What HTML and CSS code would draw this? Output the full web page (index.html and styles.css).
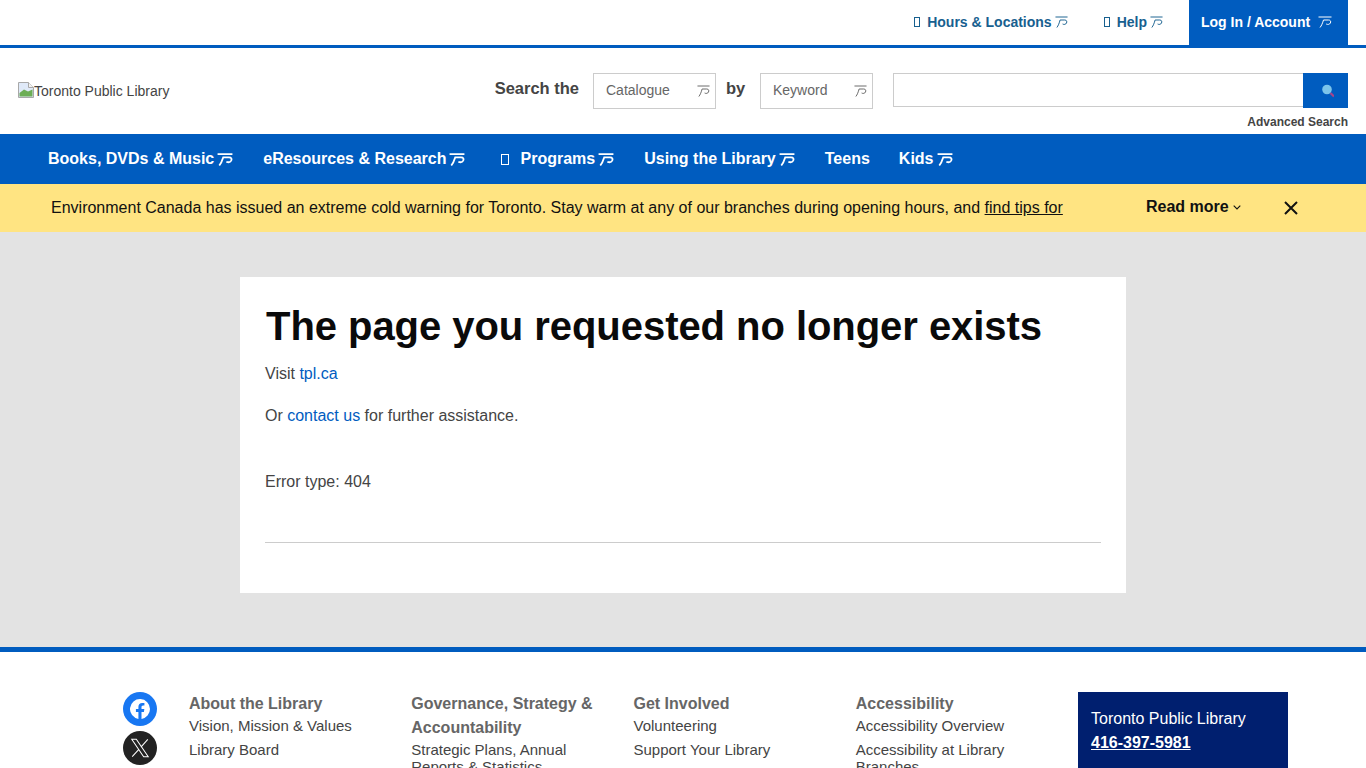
FILE: index.html
```html
<!DOCTYPE html>
<html lang="en">
<head>
<meta charset="utf-8">
<title>Toronto Public Library</title>
<link rel="stylesheet" href="styles.css">
</head>
<body>
<svg class="defs" width="0" height="0" aria-hidden="true">
  <symbol id="arr" viewBox="0 0 14 12" preserveAspectRatio="none">
    <path d="M0.5 1H13.500M2 11.500C3.500 9.800 4.600 7 5.500 4H10.500C12.600 4 13.100 5.500 12.400 7C11.600 8.500 9.800 8.800 8.200 8" fill="none" stroke="currentColor"/>
  </symbol>
</svg>
<header>
  <div class="util">
    <a class="util-link" href="#"><span class="tofu"></span>Hours &amp; Locations<svg class="arr"><use href="#arr"/></svg></a>
    <a class="util-link" href="#"><span class="tofu"></span>Help<svg class="arr"><use href="#arr"/></svg></a>
    <a class="login" href="#">Log In / Account<svg class="arr"><use href="#arr"/></svg></a>
  </div>
  <div class="masthead">
    <a class="logo" href="#">
      <svg class="broken" viewBox="0 0 16 16" aria-hidden="true">
        <path d="M0.5 0.5H10.500L15.500 5.500V15.500H0.5Z" fill="#dfe9f8" stroke="#a8a8a8"/>
        <path d="M10.500 0.5V5.500H15.500" fill="#f2f2f2" stroke="#a8a8a8"/>
        <path d="M1.500 14.500V11L6 7.500L10 9.500L14.500 7.500V14.500Z" fill="#6cae55"/>
      </svg>Toronto Public Library
    </a>
    <div class="search">
      <div class="search-row">
        <span class="search-label">Search the</span>
        <div class="select sel-cat"><span class="sel-text">Catalogue</span><svg class="arr"><use href="#arr"/></svg></div>
        <span class="search-by">by</span>
        <div class="select sel-key"><span class="sel-text">Keyword</span><svg class="arr"><use href="#arr"/></svg></div>
        <div class="input"></div>
        <button class="go" aria-label="Search">
          <svg viewBox="0 0 16 16" width="16" height="16" aria-hidden="true">
            <circle cx="9" cy="6.500" r="4.800" fill="#7cc4ea"/>
            <path d="M12.500 10L16 13.500" stroke="#a8448a" stroke-width="2.200"/>
          </svg>
        </button>
      </div>
      <a class="advanced" href="#">Advanced Search</a>
    </div>
  </div>
  <nav class="nav">
    <a href="#">Books, DVDs &amp; Music<svg class="arr"><use href="#arr"/></svg></a>
    <a href="#">eResources &amp; Research<svg class="arr"><use href="#arr"/></svg></a>
    <a class="nav-prog" href="#"><span class="tofu"></span>Programs<svg class="arr"><use href="#arr"/></svg></a>
    <a href="#">Using the Library<svg class="arr"><use href="#arr"/></svg></a>
    <a href="#">Teens</a>
    <a href="#">Kids<svg class="arr"><use href="#arr"/></svg></a>
  </nav>
  <div class="alert">
    <p class="alert-text">Environment Canada has issued an extreme cold warning for Toronto. Stay warm at any of our branches during opening hours, and <a href="#">find tips for</a></p>
    <a class="more" href="#">Read more
      <svg viewBox="0 0 8 5" width="8" height="5" aria-hidden="true"><path d="M0.7 0.7L4 4L7.3 0.7" fill="none" stroke="#111" stroke-width="1.100"/></svg>
    </a>
    <button class="close" aria-label="Close">
      <svg viewBox="0 0 14 14" width="14" height="14" aria-hidden="true"><path d="M1 1L13 13M13 1L1 13" stroke="#111" stroke-width="2"/></svg>
    </button>
  </div>
</header>
<main class="main">
  <section class="card">
    <h1>The page you requested no longer exists</h1>
    <p>Visit <a href="#">tpl.ca</a></p>
    <p>Or <a href="#">contact us</a> for further assistance.</p>
    <p class="err">Error type: 404</p>
    <hr>
  </section>
</main>
<footer class="footer">
  <div class="social">
    <a class="soc fb" href="#" aria-label="Facebook">
      <svg viewBox="0 0 24 24" width="20" height="20" aria-hidden="true"><path fill="#fff" d="M24 12a12 12 0 1 0-13.900 11.900v-8.400H7.100V12h3V9.400c0-3 1.800-4.700 4.500-4.700 1.300 0 2.700.2 2.700.2v3h-1.500c-1.500 0-2 .9-2 1.900V12h3.400l-.5 3.500h-2.900v8.400A12 12 0 0 0 24 12z"/></svg>
    </a>
    <a class="soc xx" href="#" aria-label="X">
      <svg viewBox="0 0 24 24" width="22" height="22" aria-hidden="true"><path fill="none" stroke="#fff" stroke-width="1.100" d="M3 2.500H8L21 21.500H16ZM20.500 2.500L13 11M11 13.200L3.500 21.500"/></svg>
    </a>
  </div>
  <div class="fcols">
    <div class="fcol">
      <h2>About the Library</h2>
      <a href="#">Vision, Mission &amp; Values</a>
      <a href="#">Library Board</a>
    </div>
    <div class="fcol">
      <h2>Governance, Strategy &amp; Accountability</h2>
      <a href="#">Strategic Plans, Annual Reports &amp; Statistics</a>
    </div>
    <div class="fcol">
      <h2>Get Involved</h2>
      <a href="#">Volunteering</a>
      <a href="#">Support Your Library</a>
    </div>
    <div class="fcol">
      <h2>Accessibility</h2>
      <a href="#">Accessibility Overview</a>
      <a href="#">Accessibility at Library Branches</a>
    </div>
  </div>
  <div class="contact">
    <div>Toronto Public Library</div>
    <a href="#">416-397-5981</a>
  </div>
</footer>
</body>
</html>
```
FILE: styles.css
```css
* { box-sizing: border-box; }
html, body { margin: 0; height: 768px; overflow: hidden; }
body { font-family: "Liberation Sans", Arial, sans-serif; color: #444; background: #fff; font-size: 16px; }
a { text-decoration: none; color: inherit; }
.defs { position: absolute; }
.arr { width: 13px; height: 12px; flex: none; stroke-width: 1; }
.tofu { display: inline-block; width: 6px; height: 10px; border: 1px solid currentColor; flex: none; }

.util { display: flex; justify-content: flex-end; height: 48px; padding-right: 18px; border-bottom: 3px solid #005cbf; font-size: 14px; font-weight: 700; }
.util-link { display: flex; align-items: center; color: #17608f; margin-right: 26px; padding-bottom: 1px; }
.util-link:first-child { margin-right: 36px; }
.util-link .tofu { margin-right: 7px; }
.util-link .arr { margin-left: 3px; }
.login { display: flex; align-items: center; width: 159px; height: 48px; padding: 0 0 5px 12px; background: #005cbf; color: #fff; }
.login .arr { width: 14px; margin-left: 8px; }

.masthead { display: flex; justify-content: space-between; height: 86px; padding: 25px 18px 0; }
.logo { display: flex; align-items: center; height: 36px; font-size: 14px; color: #444; }
.broken { width: 16px; height: 16px; flex: none; margin-bottom: 3px; }
.search { display: flex; flex-direction: column; align-items: flex-end; }
.search-row { display: flex; align-items: flex-start; }
.search-label { font-size: 16.500px; font-weight: 700; margin: 6px 14px 0 0; }
.search-by { font-size: 16.500px; font-weight: 700; width: 44px; padding-left: 10px; margin-top: 6px; }
.select { display: flex; align-items: center; justify-content: space-between; height: 36px; border: 1px solid #ccc; padding: 0 5px 0 12px; font-size: 14px; color: #666; }
.sel-text { position: relative; top: -1px; }
.sel-cat { width: 123px; }
.sel-key { width: 113px; margin-right: 20px; }
.input { width: 410px; height: 34px; border: 1px solid #ccc; border-right: 0; }
.go { display: flex; align-items: center; justify-content: center; width: 45px; height: 35px; padding: 0; border: 0; background: #005cbf; }
.advanced { font-size: 12px; font-weight: 700; margin-top: 6px; color: #444; }

.nav { display: flex; gap: 30px; height: 50px; padding-left: 48px; align-items: center; background: #005cbf; color: #fff; font-size: 16px; font-weight: 700; }
.nav a { display: flex; align-items: center; }
.nav .arr { width: 16px; height: 13px; margin-left: 3px; stroke-width: 1.600; }
.nav-prog { margin-left: 6px; }
.nav-prog .tofu { width: 8px; height: 11px; margin-right: 11px; }
.nav a:nth-child(5) { margin-right: -1px; }

.alert { display: flex; align-items: center; height: 48px; padding-left: 51px; background: #ffe482; color: #111; }
.alert-text { margin: 0; width: 1012px; white-space: nowrap; }
.alert-text a { text-decoration: underline; }
.more { display: flex; align-items: center; gap: 4px; margin-left: 83px; font-weight: 700; position: relative; top: -1px; }
.close { display: flex; margin-left: 43px; padding: 0; border: 0; background: none; }

.main { height: 415px; padding: 45px 240px 0; background: #e3e3e3; }
.card { width: 886px; height: 316px; padding: 25px 25px 0; background: #fff; }
.card h1 { margin: 0 0 0 1px; font-size: 40px; line-height: 48px; color: #0a0a0a; font-weight: 700; letter-spacing: -0.050px; }
.card p { margin: 12px 0 0; line-height: 24px; }
.card p + p { margin-top: 18px; }
.card p.err { margin-top: 42px; }
.card a { color: #005cbf; }
.card hr { margin: 48px 0 0; border: 0; border-top: 1px solid #ccc; }

.footer { display: flex; border-top: 5px solid #005cbf; padding: 40px 0 0 123px; }
.social { display: flex; flex-direction: column; gap: 5px; width: 66px; flex: none; }
.soc { display: flex; align-items: center; justify-content: center; width: 34px; height: 34px; border-radius: 50%; }
.fb { background: #1877f2; }
.xx { background: #222; }
.fcols { display: flex; width: 889px; flex: none; }
.fcol { width: 222.250px; padding-right: 30px; flex: none; }
.fcol h2 { margin: 0 0 1px; font-size: 16px; line-height: 24px; color: #666; font-weight: 700; }
.fcol a { display: block; font-size: 15px; line-height: 17px; margin-bottom: 7px; color: #444; }
.contact { width: 210px; height: 120px; flex: none; padding: 15px 13px; background: #001f6f; color: #fff; line-height: 24px; }
.contact a { font-weight: 700; text-decoration: underline; }
```
